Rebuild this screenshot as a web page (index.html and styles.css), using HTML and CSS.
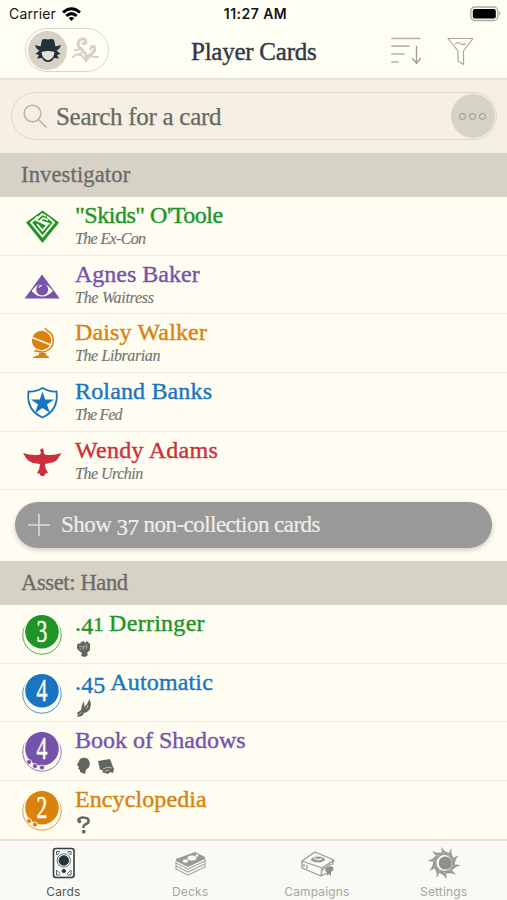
FILE: index.html
```html
<!DOCTYPE html>
<html lang="en">
<head>
<meta charset="utf-8">
<title>Player Cards</title>
<link rel="stylesheet" href="styles.css">
</head>
<body>
<div class="app">
  <header class="top">
    <div class="status">
      <div class="carrier"><span>Carrier</span>
        <svg width="19" height="14" viewBox="0 0 19 14"><path d="M0 4.6Q9.500-4.200 19 4.600L17 6.600Q9.500 0 2 6.600ZM3.300 8Q9.500 2.200 15.700 8L13.600 10Q9.500 6.400 5.400 10ZM6.600 11.100Q9.500 8.700 12.400 11.100L9.500 14Z"/></svg>
      </div>
      <div class="time">11:27 AM</div>
      <svg class="battery" width="32" height="16" viewBox="0 0 32 16"><rect x=".8" y="1" width="27" height="13.500" rx="4" fill="none" stroke="#aaa9a4" stroke-width="1.300"/><rect x="2.800" y="3" width="23" height="9.500" rx="2" fill="#000"/><path d="M29 5.500Q32 7.700 29 10Z" fill="#aaa9a4"/></svg>
    </div>
    <div class="nav">
      <div class="toggle">
        <div class="selected"><svg width="28" height="26" viewBox="0 0 28 26"><path fill="#24303c" d="M6.500 9.500L8 3Q9 1.800 11 2L14 2.500L17 2Q19 1.800 20 3L21.500 9.500L27 8Q26 12 22.500 13.500L26.500 17L23 18L25 21.500L20 21Q18 25 14 25Q10 25 8 21L3 21.500L5 18L1.500 17L5.500 13.500Q2 12 1 8Z"/><path fill="#e4e0d6" d="M7.500 15Q14 13 20.500 15Q20 20 17 22L14 23.500L11 22Q8 20 7.500 15Z"/></svg></div>
        <svg class="tentacle" width="28" height="28" viewBox="0 0 28 28" fill="none" stroke="#d5d1c6" stroke-linecap="round"><path stroke-width="3" d="M14 24C17 16 6 13 6 8C6 2 14 1 14 6C14 8 11 8 11 7"/><path stroke-width="2.800" d="M14 24C15 18 23 18 23 13C23 9 18 10 19 13"/><path stroke-width="2" d="M1 21Q6 16 10 20Q13 23 14 25Q18 18 22 21L26 21M3 14Q5 15 7 13M9 17L7 19"/></svg>
      </div>
      <h1>Player Cards</h1>
      <div class="actions">
        <svg width="31" height="29" viewBox="0 0 31 29" fill="none" stroke="#b6b2a8" stroke-width="1.700" stroke-linecap="round"><path d="M1 1.500H29M1 9.200H18M1 17H13M1 25H7"/><path stroke="#a39f96" stroke-width="1.400" d="M25.500 9.500V26.500M21.500 21.500L25.500 26.500L29.500 21.500"/></svg>
        <svg width="27" height="29" viewBox="0 0 27 29" fill="none" stroke="#aaa69c" stroke-width="1.200" stroke-linejoin="round"><path d="M1 1.500H26L16.500 14V27.500L11 24V14ZM8 7Q11 4.500 14 7Q16.500 8.500 18.500 6.500"/></svg>
      </div>
    </div>
  </header>
  <div class="search-area">
    <div class="search">
      <svg width="24" height="24" viewBox="0 0 24 24" fill="none" stroke="#b8b3a8" stroke-width="1.500" stroke-linecap="round"><circle cx="9.500" cy="9.500" r="8.300"/><path d="M15.500 15.500L23 23"/></svg>
      <span class="hint">Search for a card</span>
      <div class="more"><i></i><i></i><i></i></div>
    </div>
  </div>
  <h2 class="section investigators">Investigator</h2>
  <main>
    <article class="row rogue">
      <svg class="mark" width="42" height="42" viewBox="0 0 42 42"><path fill="currentColor" d="M21.500 5.500L38 17.500L21.500 38L5 17.500Z"/><path fill="none" stroke="#fffdf2" stroke-width="1.800" d="M17 11.500L10 17.500L21.500 31.500L33 17.500L26 11.500M25 11L21 9L15 15L26 20L21.500 25.500L16 19M27 15L22 13L19 16L29 19"/></svg>
      <div class="copy"><h3 class="skids">"Skids" O'Toole</h3><p class="excon">The Ex-Con</p></div>
    </article>
    <article class="row mystic">
      <svg class="mark" width="42" height="42" viewBox="0 0 42 42"><path fill="currentColor" d="M21 10.500L38.700 34.500H3.700Z"/><path fill="#fffdf2" d="M10.500 27Q21 12.500 32 27Q21 38 10.500 27Z"/><circle cx="21.200" cy="25.500" r="6" fill="currentColor"/><path fill="none" stroke="#fffdf2" stroke-width="1.200" d="M18 23.500Q19 21.500 21 21.500"/></svg>
      <div class="copy"><h3>Agnes Baker</h3><p class="waitress">The Waitress</p></div>
    </article>
    <article class="row seeker">
      <svg class="mark" width="42" height="42" viewBox="0 0 42 42"><circle cx="20.500" cy="18.500" r="9.700" fill="currentColor"/><path d="M11 15.500L30 23" stroke="#fffdf2" stroke-width="1.500"/><path d="M24 6L26 8.500C34 12 34 23 28 27.500Q22 32 15 28.500L13.500 30M21.500 30V34" fill="none" stroke="currentColor" stroke-width="1.500"/><path fill="currentColor" d="M18 31H25V33L28 35V36H12V35L18 33Z"/></svg>
      <div class="copy"><h3 class="daisy">Daisy Walker</h3><p class="librarian">The Librarian</p></div>
    </article>
    <article class="row guardian">
      <svg class="mark" width="42" height="42" viewBox="0 0 42 42"><path fill="none" stroke="currentColor" stroke-width="1.800" d="M21.500 7Q15 11 7.500 10.500Q5 29 21.500 36.500Q38 29 35.500 10.500Q28 11 21.500 7Z"/><path fill="currentColor" d="M21.500 10.500L24.200 18.500H33L26 23.500L29 32L21.500 27L14 32L17 23.500L10 18.500H18.800Z"/></svg>
      <div class="copy"><h3 class="roland">Roland Banks</h3><p class="fed">The Fed</p></div>
    </article>
    <article class="row survivor">
      <svg class="mark" width="42" height="42" viewBox="0 0 42 42"><path fill="currentColor" d="M2 13Q11 16 19 14.500L20 13L19 10L21.500 8L23 11L22.500 13L24 14.500Q32 16 40.500 13L38 17L36 20L33 22L29 23L24 24L24.500 28L27 33L24.500 33.500L23 36H20L18.500 33.500H16L18.500 28L19 24L12 23L8 21L5 18Z"/></svg>
      <div class="copy"><h3 class="wendy">Wendy Adams</h3><p class="urchin">The Urchin</p></div>
    </article>
    <div class="show-wrap"><div class="show"><svg width="24" height="24" viewBox="0 0 24 24" stroke="#dedbd2" stroke-width="1.600"><path d="M12 1V23M1 12H23"/></svg><span>Show <b class="three">3</b><b class="seven">7</b> non-collection cards</span></div></div>
    <h2 class="section assets">Asset: Hand</h2>
    <article class="row card rogue">
      <svg class="mark" width="42" height="42" viewBox="0 0 42 42"><circle cx="21" cy="22" r="19.200" fill="none" stroke="currentColor" stroke-width=".8"/><circle cx="21" cy="19" r="18.300" fill="#fffdf2"/><circle cx="21" cy="18.700" r="16.800" fill="currentColor"/><text class="cost" transform="translate(21 28.500) scale(.7 1)">3</text></svg>
      <div class="copy"><h3 class="derringer">.<b class="four">4</b><b class="one">1</b> Derringer</h3><svg class="skill" width="18" height="18" viewBox="0 0 18 18"><path fill="#626663" d="M2 5L4 3L5 4L6 2L9 1L10 3L12 1L14 3L15 4V10L12 13L13 15L10 17L6 16L7 13L3 10L2 8Z"/><path d="M4 6L8 7L12 5M6 8L5 10M9 7L8 10M12 6L11 9" fill="none" stroke="#bbb9af" stroke-width=".8"/></svg></div>
    </article>
    <article class="row card guardian">
      <svg class="mark" width="42" height="42" viewBox="0 0 42 42"><circle cx="21" cy="22" r="19.200" fill="none" stroke="currentColor" stroke-width=".8"/><circle cx="21" cy="19" r="18.300" fill="#fffdf2"/><circle cx="21" cy="18.700" r="16.800" fill="currentColor"/><text class="cost" transform="translate(21 28.500) scale(.7 1)">4</text></svg>
      <div class="copy"><h3 class="automatic">.<b class="four">4</b><b class="five">5</b> Automatic</h3><svg class="skill" width="18" height="18" viewBox="0 0 18 18"><path fill="#626663" d="M2 14L6 11L7 6L9 2L9.500 8L12 5L14.500 0L16 5L15 10L12 13L9 14L7 17L2 18L3 16Z"/><path stroke="#d6d3c8" stroke-width=".7" d="M13 6L11.500 10M4 15.500L7 13"/></svg></div>
    </article>
    <article class="row card mystic">
      <svg class="mark" width="42" height="42" viewBox="0 0 42 42"><circle cx="21" cy="22" r="19.200" fill="none" stroke="currentColor" stroke-width=".8"/><circle cx="21" cy="19" r="18.300" fill="#fffdf2"/><circle cx="21" cy="18.700" r="16.800" fill="currentColor"/><g fill="currentColor" stroke="#fffdf2" stroke-width=".8"><circle cx="8" cy="32" r="2.500"/><circle cx="14" cy="36" r="2.500"/><circle cx="21" cy="37.500" r="2.500"/></g><text class="cost" transform="translate(21 28.500) scale(.7 1)">4</text></svg>
      <div class="copy"><h3 class="book">Book of Shadows</h3><svg class="skill" width="40" height="18" viewBox="0 0 40 18" fill="#626663"><path d="M5 2Q9-.5 13 2Q16 6 14 10L11 13L10 17L5 15V13L3 12L4 10L2 8Z"/><path d="M23 4L35 2L38 10L39 12L38 16L35 15L33 17L27 15L28 13L25 13Z"/><path d="M28 12Q32 9 37 11M30 14L34 13" fill="none" stroke="#d6d3c8" stroke-width=".8"/></svg></div>
    </article>
    <article class="row card seeker">
      <svg class="mark" width="42" height="42" viewBox="0 0 42 42"><circle cx="21" cy="22" r="19.200" fill="none" stroke="currentColor" stroke-width=".8"/><circle cx="21" cy="19" r="18.300" fill="#fffdf2"/><circle cx="21" cy="18.700" r="16.800" fill="currentColor"/><g fill="currentColor" stroke="#fffdf2" stroke-width=".8"><circle cx="8" cy="32" r="2.500"/><circle cx="14" cy="35.500" r="2.500"/></g><text class="cost" transform="translate(21 28.500) scale(.7 1)">2</text></svg>
      <div class="copy"><h3 class="ency">Encyclopedia</h3><svg class="skill" width="18" height="18" viewBox="0 0 18 18"><path fill="none" stroke="#626663" stroke-width="2.500" d="M5 6C1 4 5 1 9 1.500C15 2 15 7 10 8.500C8 9.500 8.500 10 8.500 12"/><circle cx="4.500" cy="5.500" r="1.800" fill="#626663"/><circle cx="8.700" cy="15.700" r="1.900" fill="#626663"/></svg></div>
    </article>
  </main>
  <footer>
    <div class="tab active"><svg width="36" height="34" viewBox="0 0 36 34" fill="none" stroke="#303b43"><rect x="8.500" y="2.500" width="20.500" height="29" rx="2.500" stroke-width="1.600"/><circle cx="18.800" cy="14.500" r="4.800" fill="#26333d"/><circle cx="18.800" cy="14.500" r="6.700" stroke-width=".7"/><circle cx="18.800" cy="25" r="1.700" fill="#26333d"/><path d="M11.500 9V5.500H15M22.500 5.500H26V9M11.500 24V29H15M22.500 29H26V24M12 9L14.500 6.500M23 6.500L25.500 9M12 24.500L15.500 28M22 28L25.500 24.500" stroke-width=".8"/></svg><span>Cards</span></div>
    <div class="tab"><svg width="36" height="34" viewBox="0 0 36 34"><path fill="#999a98" d="M4 13L23 6L33 11V13L16 21L4 15Z"/><g fill="#fafaf7"><ellipse cx="13.500" cy="15" rx="2.700" ry="1.700"/><ellipse cx="20" cy="12" rx="4.500" ry="2.500"/><circle cx="25" cy="9.500" r="1.300"/></g><path fill="none" stroke="#aaa" stroke-width="1.200" d="M4 17L16 23L33 15M4 20L16 26L33 18M4 23L16 29L33 21M4 15V24M33 13V22"/></svg><span>Decks</span></div>
    <div class="tab"><svg width="38" height="34" viewBox="0 0 38 34"><path fill="none" stroke="#999a98" stroke-width="1.300" stroke-linejoin="round" d="M4 15L17 6L36 14L24 22ZM4 15V22L23 30L24 22M23 30L29 27M34 19L36 14M6 18V21M9 19V23M24 24L33 18"/><ellipse cx="20" cy="13.500" rx="7" ry="3" fill="#999a98"/><path d="M16 12Q20 15 24 12.500" fill="none" stroke="#fafaf7" stroke-width="1.200"/><path fill="#8e908e" d="M28 22L32 20L35 21L35.500 24L33 26L33 30L31 28L29 30L29 26L27 25Z"/></svg><span>Campaigns</span></div>
    <div class="tab"><svg width="36" height="34" viewBox="0 0 36 34"><g fill="#999a98"><path id="ray" d="M22 9Q14 8 15.500 .5Q17 5.500 25 8Z"/><use href="#ray" transform="rotate(36 18 17)"/><use href="#ray" transform="rotate(72 18 17)"/><use href="#ray" transform="rotate(108 18 17)"/><use href="#ray" transform="rotate(144 18 17)"/><use href="#ray" transform="rotate(180 18 17)"/><use href="#ray" transform="rotate(216 18 17)"/><use href="#ray" transform="rotate(252 18 17)"/><use href="#ray" transform="rotate(288 18 17)"/><use href="#ray" transform="rotate(324 18 17)"/></g><circle cx="18" cy="17" r="9.300" fill="#999a98"/><circle cx="18.300" cy="17" r="7.900" fill="#fafaf7"/><circle cx="19.300" cy="17" r="6.600" fill="#8e908e"/></svg><span>Settings</span></div>
  </footer>
</div>
</body>
</html>
```
FILE: styles.css
```css
* { box-sizing: border-box; }
body { margin: 0; background: #fffdf2; font-family: "Liberation Serif", serif; }
h1, h2, h3, p { margin: 0; font-weight: 400; white-space: nowrap; }
svg { display: block; flex: none; overflow: visible; }
.app { width: 507px; height: 900px; display: flex; flex-direction: column; overflow: hidden; }
.top { height: 80px; flex: none; background: #fffef5; border-bottom: 2px solid #e8e4d9; }
.status { height: 27px; display: grid; grid-template-columns: 1fr 70px 1fr; align-items: center; padding: 0 5px 0 9px; font: 14px/27px Inter, sans-serif; color: #151515; }
.carrier { display: flex; align-items: center; gap: 6px; }
.carrier span { width: 47px; letter-spacing: .15px; }
.time { font-weight: 600; font-size: 14px; letter-spacing: .45px; white-space: nowrap; text-align: center; }
.battery { justify-self: end; }
.nav { height: 51px; display: grid; grid-template-columns: 166px 126px 1fr; padding-left: 25px; }
.toggle { width: 84px; height: 44px; margin-top: 1px; border: 1px solid #d9d5ca; border-radius: 22px; display: flex; align-items: center; gap: 5px; padding-left: 2px; }
.selected { width: 39px; height: 39px; border-radius: 50%; background: #d6d2c7; display: grid; place-items: center; }
.nav h1 { font-size: 25px; line-height: 50px; color: #303946; letter-spacing: -.25px; -webkit-text-stroke: .4px; }
.actions { display: flex; gap: 25px; padding: 10px 0 0 74px; }
.search-area { height: 73px; flex: none; background: #f4eee3; padding: 12px 10px 0 11px; }
.search { height: 48px; border: 1px solid #dcd8cc; border-radius: 24px; display: flex; align-items: center; padding: 0 1px 0 11px; }
.hint { flex: 1; padding: 2px 0 0 9px; color: #656964; font-size: 25px; letter-spacing: -.28px; -webkit-text-stroke: .25px; }
.more { width: 44px; height: 44px; border-radius: 50%; background: #d6d2c6; display: flex; align-items: center; justify-content: center; gap: 3px; padding-right: 2px; }
.more i { width: 7px; height: 7px; border: 1.5px solid #98958c; border-radius: 50%; }
.section { height: 44px; flex: none; background: #d7d2c6; padding-left: 21px; color: #696d69; font-size: 22.5px; line-height: 44px; -webkit-text-stroke: .35px; }
.investigators { letter-spacing: .15px; }
.assets { letter-spacing: -.35px; }
main { flex: none; height: 642.4px; }
.row { height: 58.7px; border-bottom: 1px solid #efede2; padding-left: 21px; display: flex; align-items: flex-start; }
.mark { margin-top: 8px; }
.copy { padding: 4px 0 0 12px; }
h3 { height: 28px; font-size: 24px; line-height: 28px; -webkit-text-stroke: .4px; }
.skids { letter-spacing: -.48px; }
.daisy, .roland, .automatic { letter-spacing: .15px; }
.wendy, .derringer { letter-spacing: .27px; }
.ency { letter-spacing: .1px; }
.copy p { font-size: 16px; line-height: 19px; font-style: italic; color: #737571; letter-spacing: -.5px; -webkit-text-stroke: .15px; }
.copy .waitress { letter-spacing: -.27px; }
.copy .librarian { letter-spacing: -.4px; }
.copy .excon { letter-spacing: -.65px; }
.copy .fed { letter-spacing: -.9px; }
.rogue { color: #219428; }
.mystic { color: #7653ab; }
.seeker { color: #d9820e; }
.guardian { color: #1975c1; }
.survivor { color: #cb303c; }
.show-wrap { height: 70.500px; padding: 12px 15px 0; }
.show { height: 46px; border-radius: 23px; background: #999; box-shadow: 0 2px 5px #0003; display: flex; align-items: center; padding-left: 12px; gap: 10px; color: #f0eee7; font-size: 23px; letter-spacing: -.54px; white-space: nowrap; -webkit-text-stroke: .2px; }
b { font-weight: inherit; display: inline-block; line-height: 1; }
.four, .three, .seven, .five { vertical-align: -3px; }
.one { font-size: .75em; transform: scaleX(1.15); }
.skill { margin-top: 3px; }
.cost { font-family: "Liberation Serif", serif; font-size: 31px; letter-spacing: 0; fill: #fffdf2; text-anchor: middle; stroke: #fffdf2; stroke-width: .5px; }
footer { flex: 1; border-top: 2px solid #e7e2d7; background: #f9f9f6; display: grid; grid-template-columns: repeat(4, 1fr); }
.tab { display: flex; flex-direction: column; align-items: center; padding-top: 5px; color: #a4a5a3; font: 12px/16px Inter, sans-serif; letter-spacing: .15px; }
.tab span { margin-top: 4px; }
.active { color: #50585b; }
```
